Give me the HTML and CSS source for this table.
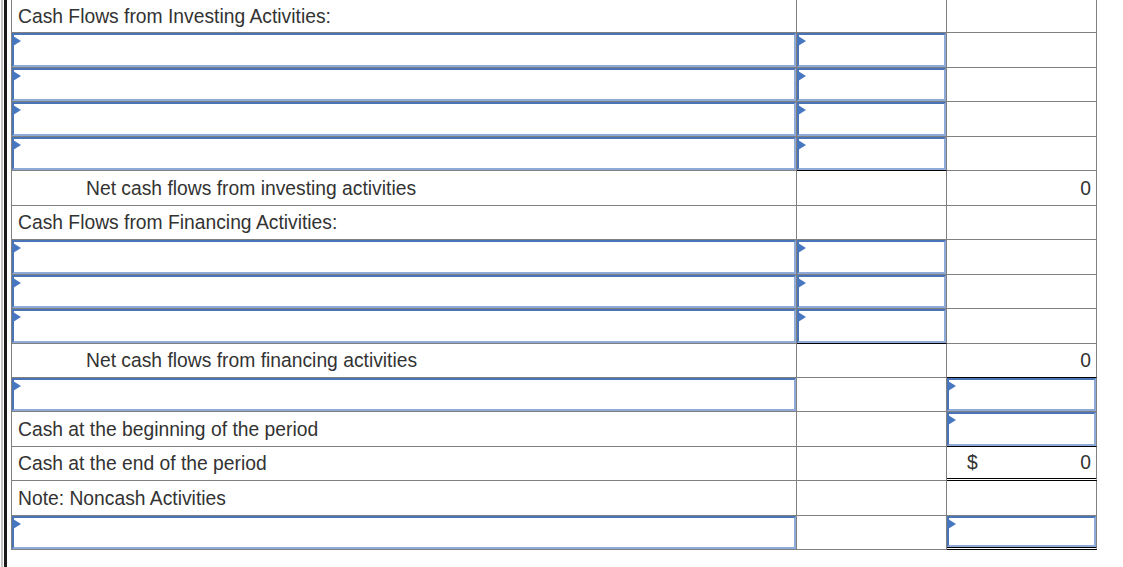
FILE: index.html
```html
<!DOCTYPE html>
<html lang="en">
<head>
<meta charset="utf-8">
<title>Cash Flows</title>
<link rel="stylesheet" href="styles.css">
</head>
<body>
<div class="frame">
  <div class="frame-inner">
    <div class="sheet">
      <div class="cell text first">Cash Flows from Investing Activities:</div>
      <div class="cell"></div>
      <div class="cell"></div>

      <div class="cell field"><input class="box" type="text"><span class="flag"></span></div>
      <div class="cell field"><input class="box" type="text"><span class="flag"></span></div>
      <div class="cell"></div>

      <div class="cell field"><input class="box" type="text"><span class="flag"></span></div>
      <div class="cell field"><input class="box" type="text"><span class="flag"></span></div>
      <div class="cell"></div>

      <div class="cell field"><input class="box" type="text"><span class="flag"></span></div>
      <div class="cell field"><input class="box" type="text"><span class="flag"></span></div>
      <div class="cell"></div>

      <div class="cell field"><input class="box" type="text"><span class="flag"></span></div>
      <div class="cell field ul"><input class="box" type="text"><span class="flag"></span></div>
      <div class="cell"></div>

      <div class="cell text indent">Net cash flows from investing activities</div>
      <div class="cell"></div>
      <div class="cell num">0</div>

      <div class="cell text">Cash Flows from Financing Activities:</div>
      <div class="cell"></div>
      <div class="cell"></div>

      <div class="cell field"><input class="box" type="text"><span class="flag"></span></div>
      <div class="cell field"><input class="box" type="text"><span class="flag"></span></div>
      <div class="cell"></div>

      <div class="cell field"><input class="box" type="text"><span class="flag"></span></div>
      <div class="cell field"><input class="box" type="text"><span class="flag"></span></div>
      <div class="cell"></div>

      <div class="cell field"><input class="box" type="text"><span class="flag"></span></div>
      <div class="cell field ul"><input class="box" type="text"><span class="flag"></span></div>
      <div class="cell"></div>

      <div class="cell text indent">Net cash flows from financing activities</div>
      <div class="cell"></div>
      <div class="cell num ul">0</div>

      <div class="cell field"><input class="box" type="text"><span class="flag"></span></div>
      <div class="cell"></div>
      <div class="cell field"><input class="box" type="text"><span class="flag"></span></div>

      <div class="cell text">Cash at the beginning of the period</div>
      <div class="cell"></div>
      <div class="cell field ul"><input class="box" type="text"><span class="flag"></span></div>

      <div class="cell text">Cash at the end of the period</div>
      <div class="cell"></div>
      <div class="cell dollar dbl"><span>$</span><span>0</span></div>

      <div class="cell text">Note: Noncash Activities</div>
      <div class="cell"></div>
      <div class="cell"></div>

      <div class="cell field"><input class="box" type="text"><span class="flag"></span></div>
      <div class="cell"></div>
      <div class="cell field dbl"><input class="box" type="text"><span class="flag"></span></div>
    </div>
  </div>
</div>
</body>
</html>
```

FILE: styles.css
```css
html, body {
  margin: 0;
  padding: 0;
  background: #fff;
}

body {
  font-family: "Liberation Sans", Arial, sans-serif;
  font-size: 19.3px;
  color: #333;
}

.frame {
  margin-left: 1px;
  border-left: 2px solid #c4c4c4;
  height: 567px;
  overflow: hidden;
}

.frame-inner {
  margin-left: 1px;
  border-left: 3px solid #1a1a1a;
  height: 567px;
  padding-left: 4px;
}

.sheet {
  display: grid;
  grid-template-columns: 785px 150px 150px;
  grid-template-rows: 33px 35px 34px 35px 34px 35px 34px 35px 34px 35px 34px 34px 35px 34px 35px 34px;
  width: 1086px;
  border-left: 1px solid #808080;
}

.cell {
  box-sizing: border-box;
  border-right: 1px solid #808080;
  border-bottom: 1px solid #808080;
  display: flex;
  align-items: center;
  min-width: 0;
  white-space: nowrap;
}

.text {
  padding-left: 6px;
  padding-top: 1px;
}

.first {
  padding-top: 2px;
}

.indent {
  padding-left: 74px;
}

.num {
  justify-content: flex-end;
  padding-right: 5px;
  padding-top: 1px;
}

.dollar {
  justify-content: space-between;
  padding: 1px 5px 0 20px;
}

.ul {
  border-bottom-color: #000;
}

.dbl {
  border-bottom: 3px double #000;
}

.field {
  position: relative;
  align-items: stretch;
}

.box {
  flex: 1;
  min-width: 0;
  margin: 0;
  padding: 0 6px;
  box-sizing: border-box;
  height: 100%;
  border: 2px solid;
  border-color: #4a74b8 #8eaad9 #8eaad9 #4a74b8;
  border-radius: 0;
  background: #fff;
  font: inherit;
  color: inherit;
  outline: none;
}

.flag {
  position: absolute;
  left: 1px;
  top: 3px;
  width: 0;
  height: 0;
  border-left: 8px solid #4777c0;
  border-top: 5px solid transparent;
  border-bottom: 5px solid transparent;
}
```
